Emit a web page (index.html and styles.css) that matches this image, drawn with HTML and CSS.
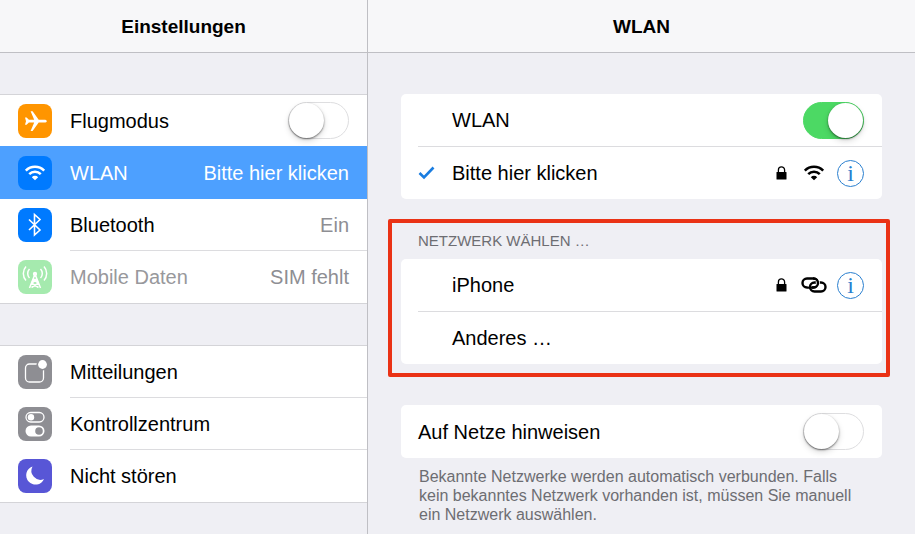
FILE: index.html
```html
<!DOCTYPE html>
<html lang="de">
<head>
    <meta charset="UTF-8">
    <meta name="viewport" content="width=device-width, initial-scale=1.0">
    <title>Einstellungen</title>
    <link rel="stylesheet" href="styles.css">
</head>
<body>

    <!-- wiederverwendete Symbole -->
    <svg class="symbols" aria-hidden="true">
        <symbol id="wifi" viewBox="0 0 20 15">
            <path d="M1.4 5.2a12.2 12.2 0 0 1 17.2 0M4.6 8.6a7.6 7.6 0 0 1 10.8 0" fill="none" stroke="currentColor" stroke-width="2.4"/>
            <path d="M10 14.4 7 11.4a4.3 4.3 0 0 1 6 0z" fill="currentColor"/>
        </symbol>
        <symbol id="lock" viewBox="0 0 16 16">
            <path d="M3.4 8V5a3.1 3.1 0 0 1 6.2 0v3" fill="none" stroke="currentColor" stroke-width="1.3"/>
            <rect x="1.5" y="7" width="10" height="7.5" rx="0.6" fill="currentColor"/>
        </symbol>
    </svg>

    <nav class="sidebar">
        <h1 class="title">Einstellungen</h1>

        <ul class="list">
            <li class="row">
                <svg class="icon orange" viewBox="0 0 34 34"><path d="M7 13.6h1.6l2.3 2.2h5.3L12.6 7.3h2l6.1 8.5h5.6c1.5 0 2.5.6 2.5 1.4s-1 1.4-2.5 1.4h-5.6l-6.1 8.5h-2l3.6-8.5h-5.3l-2.3 2.2H7l1-3.6z" fill="#fff"/></svg>
                <label class="cell" for="flugmodus">
                    <span>Flugmodus</span>
                    <input type="checkbox" class="switch" id="flugmodus">
                </label>
            </li>
            <li class="row active">
                <svg class="icon blue" viewBox="0 0 34 34"><use href="#wifi" x="6" y="9" width="22" height="16"/></svg>
                <a class="cell" href="#wlan"><span>WLAN</span><span class="value">Bitte hier klicken</span></a>
            </li>
            <li class="row">
                <svg class="icon blue" viewBox="0 0 34 34"><path d="m11 11.5 11 10.5-5.5 5V6.5l5.5 5L11 22" fill="none" stroke="#fff" stroke-width="1.6"/></svg>
                <a class="cell" href="#bluetooth"><span>Bluetooth</span><span class="value">Ein</span></a>
            </li>
            <li class="row disabled">
                <svg class="icon green" viewBox="0 0 34 34" fill="none" stroke="#fff" stroke-width="1.5">
                    <path d="m17 14-5.5 14M17 14l5.5 14M14.8 19.5h4.4M13.5 23l7 4.5M20.5 23l-7 4.5M15 19.5l5.5 3.5M19 19.5 13.5 23"/>
                    <circle cx="17" cy="14" r="1.4" fill="#fff"/>
                    <path d="M11.5 9a6.5 6.5 0 0 0 0 9M22.5 9a6.5 6.5 0 0 1 0 9M8 6.5a10.5 10.5 0 0 0 0 14M26 6.5a10.5 10.5 0 0 1 0 14"/>
                </svg>
                <a class="cell" href="#mobil"><span>Mobile Daten</span><span class="value">SIM fehlt</span></a>
            </li>
        </ul>

        <ul class="list">
            <li class="row">
                <svg class="icon gray" viewBox="0 0 34 34">
                    <rect x="7.5" y="9" width="18" height="18" rx="4" fill="none" stroke="#fff" stroke-width="1.3"/>
                    <circle cx="24.5" cy="9.5" r="6" fill="#8e8e93"/>
                    <circle cx="24.5" cy="9.5" r="4.4" fill="#fff"/>
                </svg>
                <a class="cell" href="#mitteilungen"><span>Mitteilungen</span></a>
            </li>
            <li class="row">
                <svg class="icon gray" viewBox="0 0 34 34">
                    <rect x="8" y="5.5" width="18" height="9.5" rx="4.7" fill="none" stroke="#fff" stroke-width="1.3"/>
                    <circle cx="13" cy="10.2" r="3.2" fill="#fff"/>
                    <rect x="7.5" y="18.5" width="19" height="11" rx="5.5" fill="#fff"/>
                    <circle cx="21" cy="24" r="3.8" fill="#8e8e93"/>
                </svg>
                <a class="cell" href="#kontrollzentrum"><span>Kontrollzentrum</span></a>
            </li>
            <li class="row">
                <svg class="icon purple" viewBox="0 0 34 34"><path d="M14.5 7.5a9.3 9.3 0 1 0 11.5 12.5 9 9 0 0 1-11.5-12.5z" fill="#fff"/></svg>
                <a class="cell" href="#nicht-stoeren"><span>Nicht stören</span></a>
            </li>
        </ul>
    </nav>

    <main class="detail" id="wlan">
        <h2 class="title">WLAN</h2>

        <div class="content">
            <div class="card">
                <label class="network" for="wlan-an">
                    <span class="name">WLAN</span>
                    <input type="checkbox" class="switch" id="wlan-an" checked>
                </label>
                <div class="network">
                    <svg class="check" viewBox="0 0 17 14"><path d="m1.5 7 4.5 4.500L15.500 1.500" fill="none" stroke="#1a7de0" stroke-width="2.600"/></svg>
                    <span class="name">Bitte hier klicken</span>
                    <svg class="lock"><use href="#lock"/></svg>
                    <svg class="signal"><use href="#wifi"/></svg>
                    <button class="info" aria-label="Details zu Bitte hier klicken">i</button>
                </div>
            </div>

            <section class="highlight">
                <h3>NETZWERK WÄHLEN …</h3>
                <div class="card">
                    <div class="network">
                        <span class="name">iPhone</span>
                        <svg class="lock"><use href="#lock"/></svg>
                        <svg class="signal" viewBox="0 0 26 16" fill="none">
                            <rect x="1.500" y="1.500" width="15.500" height="9" rx="4.500" stroke="#000" stroke-width="2.400"/>
                            <path d="M8.500 9.500a4.500 4.500 0 0 1 4.500-4.500h7" stroke="#fff" stroke-width="4"/>
                            <rect x="9" y="5.500" width="15.500" height="9" rx="4.500" stroke="#000" stroke-width="2.400"/>
                            <path d="M16.200 3.600a4.500 4.500 0 0 1-1 6" stroke="#fff" stroke-width="4"/>
                            <path d="M12 1.500h.5a4.500 4.500 0 0 1 0 9H11" stroke="#000" stroke-width="2.400"/>
                        </svg>
                        <button class="info" aria-label="Details zu iPhone">i</button>
                    </div>
                    <div class="network">
                        <span class="name">Anderes …</span>
                    </div>
                </div>
            </section>

            <div class="card">
                <label class="network" for="hinweisen">
                    <span>Auf Netze hinweisen</span>
                    <input type="checkbox" class="switch" id="hinweisen">
                </label>
            </div>
            <p class="note">Bekannte Netzwerke werden automatisch verbunden. Falls kein bekanntes Netzwerk vorhanden ist, müssen Sie manuell ein Netzwerk auswählen.</p>
        </div>
    </main>

</body>
</html>
```
FILE: styles.css
```css
* {
    box-sizing: border-box;
}
body {
    display: flex;
    margin: 0;
    min-height: 100vh;
    font-family: "Liberation Sans", Arial, sans-serif;
    font-size: 20px;
    line-height: 24px;
    color: #000;
    background-color: #efeff4;
}
.symbols {
    position: absolute;
    width: 0;
    height: 0;
}
.title {
    margin: 0;
    height: 53px;
    line-height: 53px;
    font-size: 19px;
    text-align: center;
    background-color: #f7f7f9;
    border-bottom: 1px solid #bfbfc4;
}

/* Seitenleiste */
.sidebar {
    flex: 0 0 368px;
    border-right: 1px solid #bfbfc4;
}
.list {
    list-style: none;
    margin: 41px 0 0;
    padding: 0;
    background-color: #fff;
    border-top: 1px solid #d4d4d8;
    border-bottom: 1px solid #d4d4d8;
}
.row {
    display: flex;
    align-items: center;
    gap: 18px;
    padding-left: 18px;
}
.icon {
    flex: none;
    width: 34px;
    height: 34px;
    border-radius: 8px;
    color: #fff;
}
.orange {
    background-color: #ff9500;
}
.blue {
    background-color: #007aff;
}
.green {
    background-color: #a5eaae;
}
.gray {
    background-color: #8e8e93;
}
.purple {
    background-color: #5856d6;
}
.cell {
    flex: 1;
    display: flex;
    align-items: center;
    justify-content: space-between;
    height: 52px;
    padding-right: 18px;
    color: inherit;
    text-decoration: none;
    border-bottom: 1px solid #dcdcdf;
}
.row:last-child .cell {
    border-bottom-color: transparent;
}
.value {
    color: #8e8e93;
}
.active {
    position: relative;
    color: #fff;
    background-color: #4da0ff;
    box-shadow: 0 -1px 0 #4da0ff;
}
.active .cell {
    border-bottom-color: transparent;
}
.active .value {
    color: inherit;
}
.disabled {
    color: #98989c;
}

/* Schalter */
.switch {
    appearance: none;
    flex: none;
    width: 61px;
    height: 37px;
    margin: 0;
    border: 1px solid #dedee0;
    border-radius: 19px;
    background-color: #fff;
}
.switch::before {
    content: "";
    display: block;
    width: 35px;
    height: 35px;
    border-radius: 50%;
    background-color: #fff;
    box-shadow: 0 1px 2px rgba(0, 0, 0, 0.5), 0 3px 6px rgba(0, 0, 0, 0.15);
}
.switch:checked {
    background-color: #4cd964;
    border-color: #4cd964;
}
.switch:checked::before {
    margin-left: auto;
}

/* Detailansicht */
.detail {
    flex: 1;
}
.content {
    padding: 41px 33px 10px;
}
.card {
    padding-left: 17px;
    background-color: #fff;
    border-radius: 5px;
}
.network {
    display: flex;
    align-items: center;
    gap: 10px;
    height: 52px;
    padding-right: 18px;
}
.network + .network,
.network:only-child {
    height: 53px;
}
.network + .network {
    border-top: 1px solid #dcdcdf;
}
.network .switch {
    margin-left: auto;
}
.name {
    flex: 1;
    padding-left: 34px;
}
.check {
    width: 17px;
    height: 14px;
}
.check + .name {
    padding-left: 7px;
}
.lock {
    width: 16px;
    height: 16px;
}
.signal {
    width: 26px;
    height: 16px;
}
.info {
    width: 27px;
    height: 27px;
    padding: 0;
    border: 1px solid #2a7fcf;
    border-radius: 50%;
    background: none;
    color: #2a7fcf;
    font-family: "Liberation Serif", serif;
    font-size: 24px;
    line-height: 24px;
}
.highlight {
    margin: 20px -8px 28px -13px;
    padding: 0 4px 9px 9px;
    border: 4px solid #ea3215;
    border-radius: 2px;
}
.highlight h3 {
    margin: 0;
    padding-left: 17px;
    font-size: 15px;
    font-weight: normal;
    line-height: 36px;
    color: #6d6d72;
}
.note {
    margin: 9px 18px 0;
    font-size: 16px;
    line-height: 19px;
    color: #6d6d72;
}
```
